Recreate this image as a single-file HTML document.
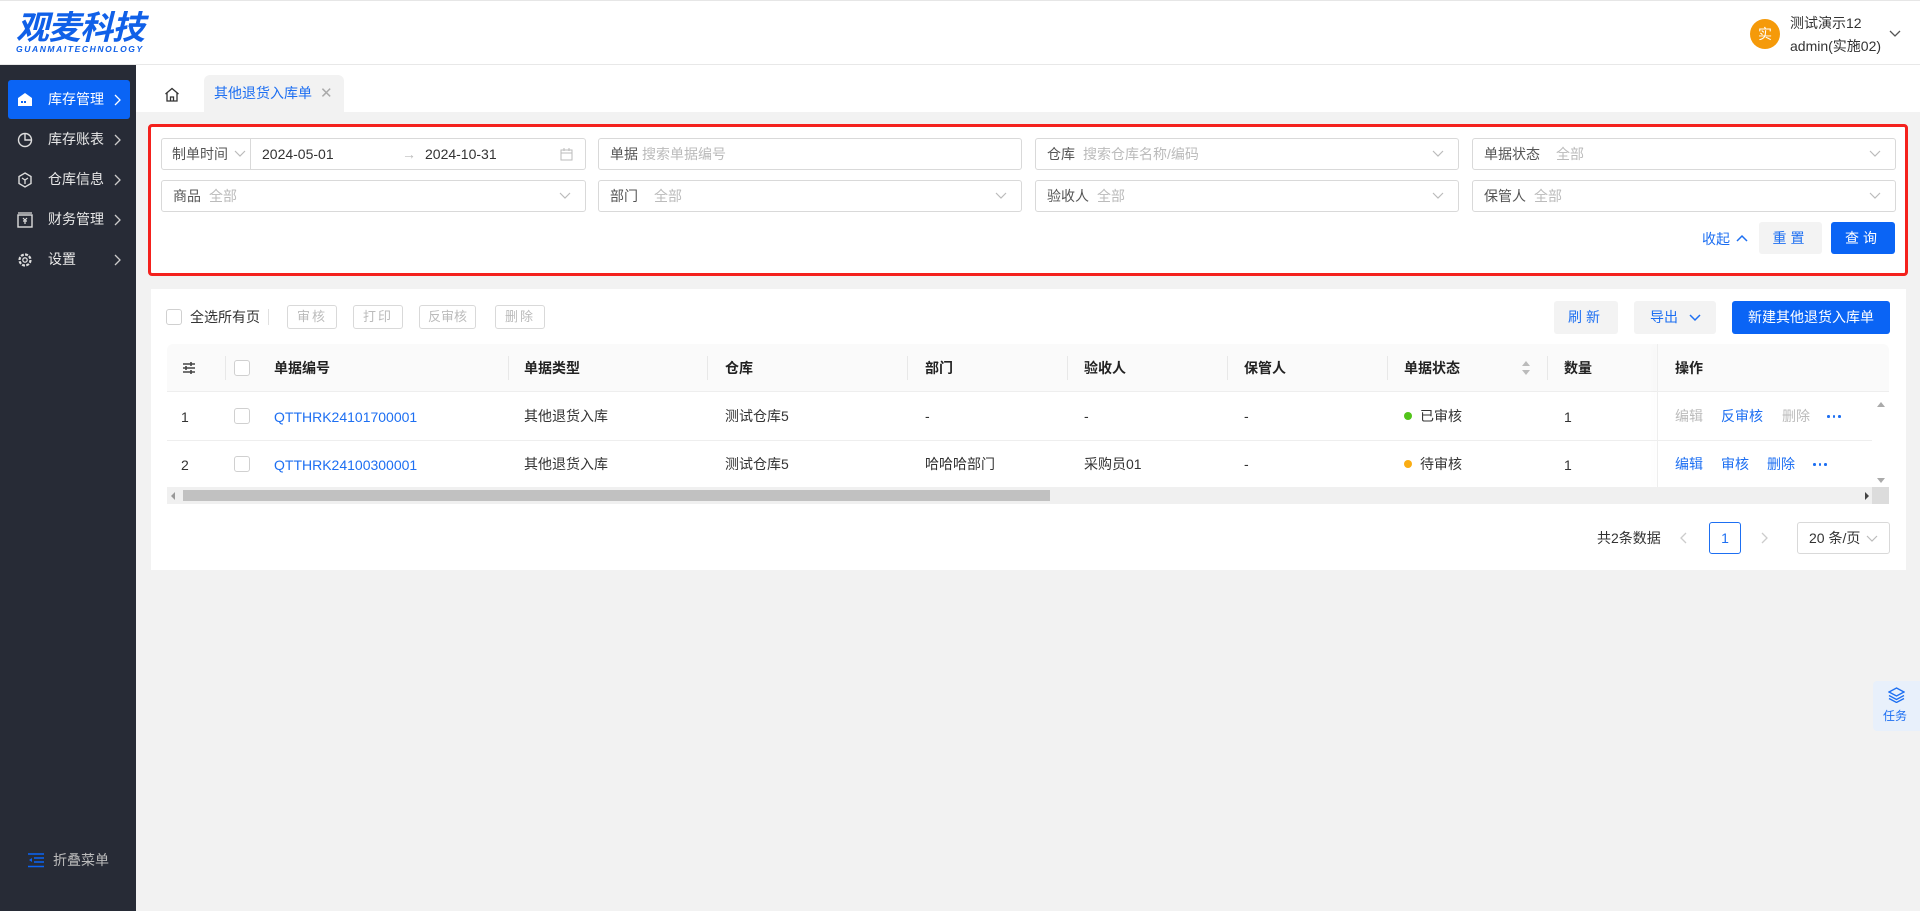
<!DOCTYPE html>
<html><head><meta charset="utf-8"><style>
*{box-sizing:border-box;margin:0;padding:0}
body{width:1920px;height:911px;position:relative;overflow:hidden;background:#f2f2f2;font-family:"Liberation Sans","Noto Sans CJK SC",sans-serif;font-size:14px;color:#333}
.a{position:absolute}
.hdr{left:0;top:0;width:1920px;height:65px;background:#fff;border-bottom:1px solid #e8e8e8;border-top:1px solid #e6e6e6}
.side{left:0;top:65px;width:136px;height:846px;background:#272b36}
.mi{position:absolute;left:8px;width:122px;height:39px;color:#e8e8e8;font-size:14px;line-height:39px;padding-left:40px}
.mi.act{background:#0a64f5;border-radius:3px;color:#fff}
.mi .ch{position:absolute;right:9px;top:14px}
.mi svg.ic{position:absolute;left:9px;top:12px}
.fld{position:absolute;height:32px;border:1px solid #d9d9d9;border-radius:3px;background:#fff;line-height:30px;padding-left:11px;font-size:14px;color:#555}
.fld .ph{color:#bbb;margin-left:8px}
.fld .dd{position:absolute;right:14px;top:11px}
.btn{position:absolute;text-align:center;border-radius:3px}
.gb{border:1px solid #d9d9d9;color:#bbb;height:24px;line-height:22px;font-size:13px;background:#fff;letter-spacing:2px}
.th{position:absolute;top:344px;height:48px;line-height:48px;font-weight:bold;color:#222;font-size:14px}
.td{position:absolute;font-size:14px;color:#333;line-height:20px}
.sep{position:absolute;top:356px;width:1px;height:24px;background:#e8e8e8}
.cb{position:absolute;width:16px;height:16px;border:1px solid #d0d0d0;border-radius:3px;background:#fff}
.lnk{color:#1d6ff2}
.dots{position:absolute;display:flex;gap:3px}
.dots i{width:2.5px;height:2.5px;border-radius:50%;background:#1d6ff2;display:block}
</style></head><body>
<svg width="0" height="0" style="position:absolute"><defs><path id="chev" d="M1 1l5 5 5-5" stroke="#bbb" stroke-width="1.2" fill="none"/></defs></svg>
<div class="a hdr">
  <div class="a" style="left:16px;top:8px;font-size:33px;font-style:italic;font-weight:bold;color:#1060e8;letter-spacing:-1px;line-height:38px">观麦科技</div>
  <div class="a" style="left:16px;top:43px;font-size:8.5px;font-style:italic;font-weight:bold;color:#1060e8;letter-spacing:1.6px">GUANMAITECHNOLOGY</div>
  <div class="a" style="left:1750px;top:18px;width:30px;height:30px;border-radius:50%;background:#f59a0a;color:#fff;text-align:center;line-height:30px;font-size:14px">实</div>
  <div class="a" style="left:1790px;top:12px;font-size:14px;color:#333">测试演示12</div>
  <div class="a" style="left:1790px;top:35px;font-size:14px;color:#333">admin(实施02)</div>
  <svg class="a" style="left:1889px;top:28px" width="12" height="10" viewBox="0 0 12 10"><path d="M1 2l5 5 5-5" stroke="#555" stroke-width="1.3" fill="none"/></svg>
</div>
<div class="a side">
  <div class="mi act" style="top:15px"><svg class="ic" width="16" height="15" viewBox="0 0 16 15"><path d="M1 6L8 1l7 5v8H1z" fill="#fff"/><rect x="4" y="9" width="2" height="2" fill="#0a64f5"/><rect x="7" y="9" width="2" height="2" fill="#0a64f5"/></svg>库存管理<svg class="ch" width="7" height="12" viewBox="0 0 7 12"><path d="M1 1l5 5-5 5" stroke="#fff" stroke-width="1.3" fill="none"/></svg></div>
  <div class="mi" style="top:55px"><svg class="ic" width="16" height="16" viewBox="0 0 16 16"><circle cx="8" cy="8" r="6.5" stroke="#ddd" fill="none" stroke-width="1.4"/><path d="M8 1.5V8h6.5" stroke="#ddd" fill="none" stroke-width="1.4"/></svg>库存账表<svg class="ch" width="7" height="12" viewBox="0 0 7 12"><path d="M1 1l5 5-5 5" stroke="#ccc" stroke-width="1.3" fill="none"/></svg></div>
  <div class="mi" style="top:95px"><svg class="ic" width="16" height="16" viewBox="0 0 16 16"><path d="M8 1l6 3.5v7L8 15l-6-3.5v-7z" stroke="#ddd" fill="none" stroke-width="1.4"/><path d="M5 6l3 2 3-2M8 8v4" stroke="#ddd" fill="none" stroke-width="1.3"/></svg>仓库信息<svg class="ch" width="7" height="12" viewBox="0 0 7 12"><path d="M1 1l5 5-5 5" stroke="#ccc" stroke-width="1.3" fill="none"/></svg></div>
  <div class="mi" style="top:135px"><svg class="ic" width="16" height="16" viewBox="0 0 16 16"><rect x="1" y="3" width="14" height="12" stroke="#ddd" fill="none" stroke-width="1.4"/><path d="M1 1h14M6 6l2 2 2-2M8 8v4M6 9h4" stroke="#ddd" fill="none" stroke-width="1.2"/></svg>财务管理<svg class="ch" width="7" height="12" viewBox="0 0 7 12"><path d="M1 1l5 5-5 5" stroke="#ccc" stroke-width="1.3" fill="none"/></svg></div>
  <div class="mi" style="top:175px"><svg class="ic" width="16" height="16" viewBox="0 0 16 16"><circle cx="8" cy="8" r="5.5" stroke="#ddd" fill="none" stroke-width="2.2" stroke-dasharray="3 1.3"/><circle cx="8" cy="8" r="2.2" stroke="#ddd" fill="none" stroke-width="1.3"/></svg>设置<svg class="ch" width="7" height="12" viewBox="0 0 7 12"><path d="M1 1l5 5-5 5" stroke="#ccc" stroke-width="1.3" fill="none"/></svg></div>
  <svg class="a" style="left:28px;top:788px" width="16" height="15" viewBox="0 0 16 15"><path d="M0 1h16M6 5h10M6 9h10M0 13.5h16" stroke="#0a64f5" stroke-width="1.6"/><path d="M4 5v4L1 7z" fill="#0a64f5"/></svg>
  <div class="a" style="left:53px;top:785px;color:#bbb;font-size:14px">折叠菜单</div>
</div>
<!-- tab bar -->
<div class="a" style="left:136px;top:65px;width:1784px;height:47px;background:#fff"></div>
<svg class="a" style="left:164px;top:87px" width="16" height="15" viewBox="0 0 16 15"><path d="M1.5 7L8 1.5 14.5 7M3 6v8h10V6M6.5 14v-4h3v4" stroke="#333" stroke-width="1.3" fill="none"/></svg>
<div class="a" style="left:204px;top:75px;width:140px;height:37px;background:#f2f2f2;border-radius:6px 6px 0 0;line-height:37px;padding-left:10px;color:#1d6ff2;font-size:14px">其他退货入库单<span style="color:#aaa;margin-left:8px;font-size:15px">✕</span></div>
<!-- search box -->
<div class="a" style="left:148px;top:124px;width:1760px;height:152px;background:#fff;border:3px solid #f4211d;border-radius:4px"></div>
<div class="fld" style="left:161px;top:138px;width:425px;padding-left:10px"><span>制单时间</span><svg style="position:absolute;left:72px;top:11px" width="12" height="8" viewBox="0 0 12 8"><use href="#chev"/></svg><span style="position:absolute;left:88px;top:0;height:30px;border-left:1px solid #d9d9d9"></span><span style="position:absolute;left:100px;color:#333">2024-05-01</span><span style="position:absolute;left:240px;color:#bbb">→</span><span style="position:absolute;left:263px;color:#333">2024-10-31</span><svg style="position:absolute;right:12px;top:9px" width="13" height="13" viewBox="0 0 13 13"><rect x="1" y="2" width="11" height="10" stroke="#bbb" fill="none"/><path d="M1 5h11M4 0v3M9 0v3" stroke="#bbb"/></svg></div>
<div class="fld" style="left:598px;top:138px;width:424px">单据<span class="ph" style="margin-left:4px">搜索单据编号</span></div>
<div class="fld" style="left:1035px;top:138px;width:424px">仓库<span class="ph">搜索仓库名称/编码</span><svg class="dd" width="12" height="8" viewBox="0 0 12 8"><use href="#chev"/></svg></div>
<div class="fld" style="left:1472px;top:138px;width:424px">单据状态<span class="ph" style="margin-left:16px">全部</span><svg class="dd" width="12" height="8" viewBox="0 0 12 8"><use href="#chev"/></svg></div>
<div class="fld" style="left:161px;top:180px;width:425px">商品<span class="ph">全部</span><svg class="dd" width="12" height="8" viewBox="0 0 12 8"><use href="#chev"/></svg></div>
<div class="fld" style="left:598px;top:180px;width:424px">部门<span class="ph" style="margin-left:16px">全部</span><svg class="dd" width="12" height="8" viewBox="0 0 12 8"><use href="#chev"/></svg></div>
<div class="fld" style="left:1035px;top:180px;width:424px">验收人<span class="ph">全部</span><svg class="dd" width="12" height="8" viewBox="0 0 12 8"><use href="#chev"/></svg></div>
<div class="fld" style="left:1472px;top:180px;width:424px">保管人<span class="ph">全部</span><svg class="dd" width="12" height="8" viewBox="0 0 12 8"><use href="#chev"/></svg></div>
<div class="a" style="left:1702px;top:229px;color:#1d6ff2;font-size:14px">收起</div>
<svg class="a" style="left:1736px;top:234px" width="12" height="8" viewBox="0 0 12 8"><path d="M1 7l5-5 5 5" stroke="#1d6ff2" stroke-width="1.5" fill="none"/></svg>
<div class="btn" style="left:1759px;top:222px;width:63px;height:32px;background:#f3f3f3;color:#1d6ff2;line-height:32px;letter-spacing:4px">重置</div>
<div class="btn" style="left:1831px;top:222px;width:64px;height:32px;background:#0a64f5;color:#fff;line-height:32px;letter-spacing:4px">查询</div>
<!-- table card -->
<div class="a" style="left:151px;top:289px;width:1755px;height:281px;background:#fff"></div>
<div class="cb" style="left:166px;top:309px"></div>
<div class="a" style="left:190px;top:307px;font-size:14px;color:#333">全选所有页</div>
<div class="a" style="left:268px;top:309px;width:1px;height:16px;background:#e0e0e0"></div>
<div class="btn gb" style="left:287px;top:305px;width:50px">审核</div>
<div class="btn gb" style="left:353px;top:305px;width:50px">打印</div>
<div class="btn gb" style="left:419px;top:305px;width:57px;letter-spacing:0">反审核</div>
<div class="btn gb" style="left:495px;top:305px;width:50px">删除</div>
<div class="btn" style="left:1554px;top:301px;width:64px;height:33px;background:#f3f3f3;color:#1d6ff2;line-height:33px;letter-spacing:4px">刷新</div>
<div class="btn" style="left:1634px;top:301px;width:82px;height:33px;background:#f3f3f3;color:#1d6ff2;line-height:33px;padding-right:22px">导出</div>
<svg class="a" style="left:1689px;top:314px" width="12" height="8" viewBox="0 0 12 8"><path d="M1 1l5 5 5-5" stroke="#1d6ff2" stroke-width="1.5" fill="none"/></svg>
<div class="btn" style="left:1732px;top:301px;width:158px;height:33px;background:#0a64f5;color:#fff;line-height:33px">新建其他退货入库单</div>
<div class="a" style="left:167px;top:344px;width:1722px;height:48px;background:#fafafa;border-bottom:1px solid #eee;border-radius:6px 6px 0 0"></div>
<div class="a" style="left:1657px;top:344px;width:1px;height:143px;background:#eee;box-shadow:-3px 0 6px rgba(0,0,0,.06)"></div>
<svg class="a" style="left:182px;top:362px" width="14" height="12" viewBox="0 0 14 12"><path d="M1 2h12M1 6h12M1 10h12" stroke="#444" stroke-width="1.4"/><path d="M9 0v4M4 4v4M9 8v4" stroke="#444" stroke-width="1.6"/></svg>
<div class="sep" style="left:225px"></div>
<div class="cb" style="left:234px;top:360px"></div>
<div class="th" style="left:274px">单据编号</div><div class="sep" style="left:508px"></div>
<div class="th" style="left:524px">单据类型</div><div class="sep" style="left:707px"></div>
<div class="th" style="left:725px">仓库</div><div class="sep" style="left:907px"></div>
<div class="th" style="left:925px">部门</div><div class="sep" style="left:1067px"></div>
<div class="th" style="left:1084px">验收人</div><div class="sep" style="left:1227px"></div>
<div class="th" style="left:1244px">保管人</div><div class="sep" style="left:1387px"></div>
<div class="th" style="left:1404px">单据状态</div>
<svg class="a" style="left:1522px;top:361px" width="8" height="14" viewBox="0 0 8 14"><path d="M4 0l4 5H0zM4 14l4-5H0z" fill="#bbb"/></svg>
<div class="sep" style="left:1547px"></div>
<div class="th" style="left:1564px">数量</div>
<div class="th" style="left:1675px">操作</div>
<div class="a" style="left:167px;top:440px;width:1705px;height:1px;background:#eee"></div>
<div class="a" style="left:167px;top:487px;width:1705px;height:1px;background:#eee"></div>
<!-- row1 -->
<div class="td" style="left:181px;top:407px">1</div><div class="cb" style="left:234px;top:408px"></div>
<div class="td lnk" style="left:274px;top:407px">QTTHRK24101700001</div>
<div class="td" style="left:524px;top:406px">其他退货入库</div>
<div class="td" style="left:725px;top:406px">测试仓库5</div>
<div class="td" style="left:925px;top:406px">-</div>
<div class="td" style="left:1084px;top:406px">-</div>
<div class="td" style="left:1244px;top:406px">-</div>
<div class="a" style="left:1404px;top:412px;width:8px;height:8px;border-radius:50%;background:#52c41a"></div>
<div class="td" style="left:1420px;top:406px">已审核</div>
<div class="td" style="left:1564px;top:407px">1</div>
<div class="td" style="left:1675px;top:406px;color:#bbb">编辑</div>
<div class="td lnk" style="left:1721px;top:406px">反审核</div>
<div class="td" style="left:1782px;top:406px;color:#bbb">删除</div>
<div class="dots" style="left:1827px;top:415px"><i></i><i></i><i></i></div>
<!-- row2 -->
<div class="td" style="left:181px;top:455px">2</div><div class="cb" style="left:234px;top:456px"></div>
<div class="td lnk" style="left:274px;top:455px">QTTHRK24100300001</div>
<div class="td" style="left:524px;top:454px">其他退货入库</div>
<div class="td" style="left:725px;top:454px">测试仓库5</div>
<div class="td" style="left:925px;top:454px">哈哈哈部门</div>
<div class="td" style="left:1084px;top:454px">采购员01</div>
<div class="td" style="left:1244px;top:454px">-</div>
<div class="a" style="left:1404px;top:460px;width:8px;height:8px;border-radius:50%;background:#faad14"></div>
<div class="td" style="left:1420px;top:454px">待审核</div>
<div class="td" style="left:1564px;top:455px">1</div>
<div class="td lnk" style="left:1675px;top:454px">编辑</div>
<div class="td lnk" style="left:1721px;top:454px">审核</div>
<div class="td lnk" style="left:1767px;top:454px">删除</div>
<div class="dots" style="left:1813px;top:463px"><i></i><i></i><i></i></div>
<!-- scrollbars -->
<div class="a" style="left:1872px;top:392px;width:17px;height:95px;background:#fff"></div>
<div class="a" style="left:1877px;top:402px;width:0;height:0;border:4px solid transparent;border-bottom:5px solid #aaa;border-top:0"></div>
<div class="a" style="left:1877px;top:478px;width:0;height:0;border:4px solid transparent;border-top:5px solid #aaa;border-bottom:0"></div>
<div class="a" style="left:167px;top:487px;width:1722px;height:17px;background:#f0f0f0"></div>
<div class="a" style="left:183px;top:490px;width:867px;height:11px;background:#c1c1c1"></div>
<div class="a" style="left:171px;top:492px;width:0;height:0;border:4px solid transparent;border-right:4px solid #999;border-left:0"></div>
<div class="a" style="left:1865px;top:492px;width:0;height:0;border:4px solid transparent;border-left:4px solid #444;border-right:0"></div>
<div class="a" style="left:1872px;top:487px;width:17px;height:17px;background:#dcdcdc"></div>
<!-- pagination -->
<div class="a" style="left:1597px;top:528px;font-size:14px;color:#333">共2条数据</div>
<svg class="a" style="left:1680px;top:532px" width="7" height="12" viewBox="0 0 7 12"><path d="M6 1L1 6l5 5" stroke="#ccc" stroke-width="1.3" fill="none"/></svg>
<div class="a" style="left:1709px;top:522px;width:32px;height:32px;border:1px solid #1d6ff2;border-radius:3px;color:#1d6ff2;text-align:center;line-height:30px">1</div>
<svg class="a" style="left:1761px;top:532px" width="7" height="12" viewBox="0 0 7 12"><path d="M1 1l5 5-5 5" stroke="#ccc" stroke-width="1.3" fill="none"/></svg>
<div class="a" style="left:1797px;top:522px;width:93px;height:32px;border:1px solid #d9d9d9;border-radius:3px;line-height:30px;padding-left:11px;color:#333">20 条/页</div>
<svg class="a" style="left:1866px;top:535px" width="12" height="8" viewBox="0 0 12 8"><use href="#chev"/></svg>
<!-- task float -->
<div class="a" style="left:1873px;top:681px;width:47px;height:50px;background:#e8f0fb;border-radius:4px 0 0 4px"></div>
<svg class="a" style="left:1888px;top:687px" width="17" height="16" viewBox="0 0 17 16"><path d="M8.5 1L16 5l-7.5 4L1 5z M1 8.5l7.5 4 7.5-4 M1 11.5l7.5 4 7.5-4" stroke="#1d6ff2" stroke-width="1.3" fill="none"/></svg>
<div class="a" style="left:1883px;top:707px;font-size:12px;color:#1d6ff2">任务</div>
</body></html>
